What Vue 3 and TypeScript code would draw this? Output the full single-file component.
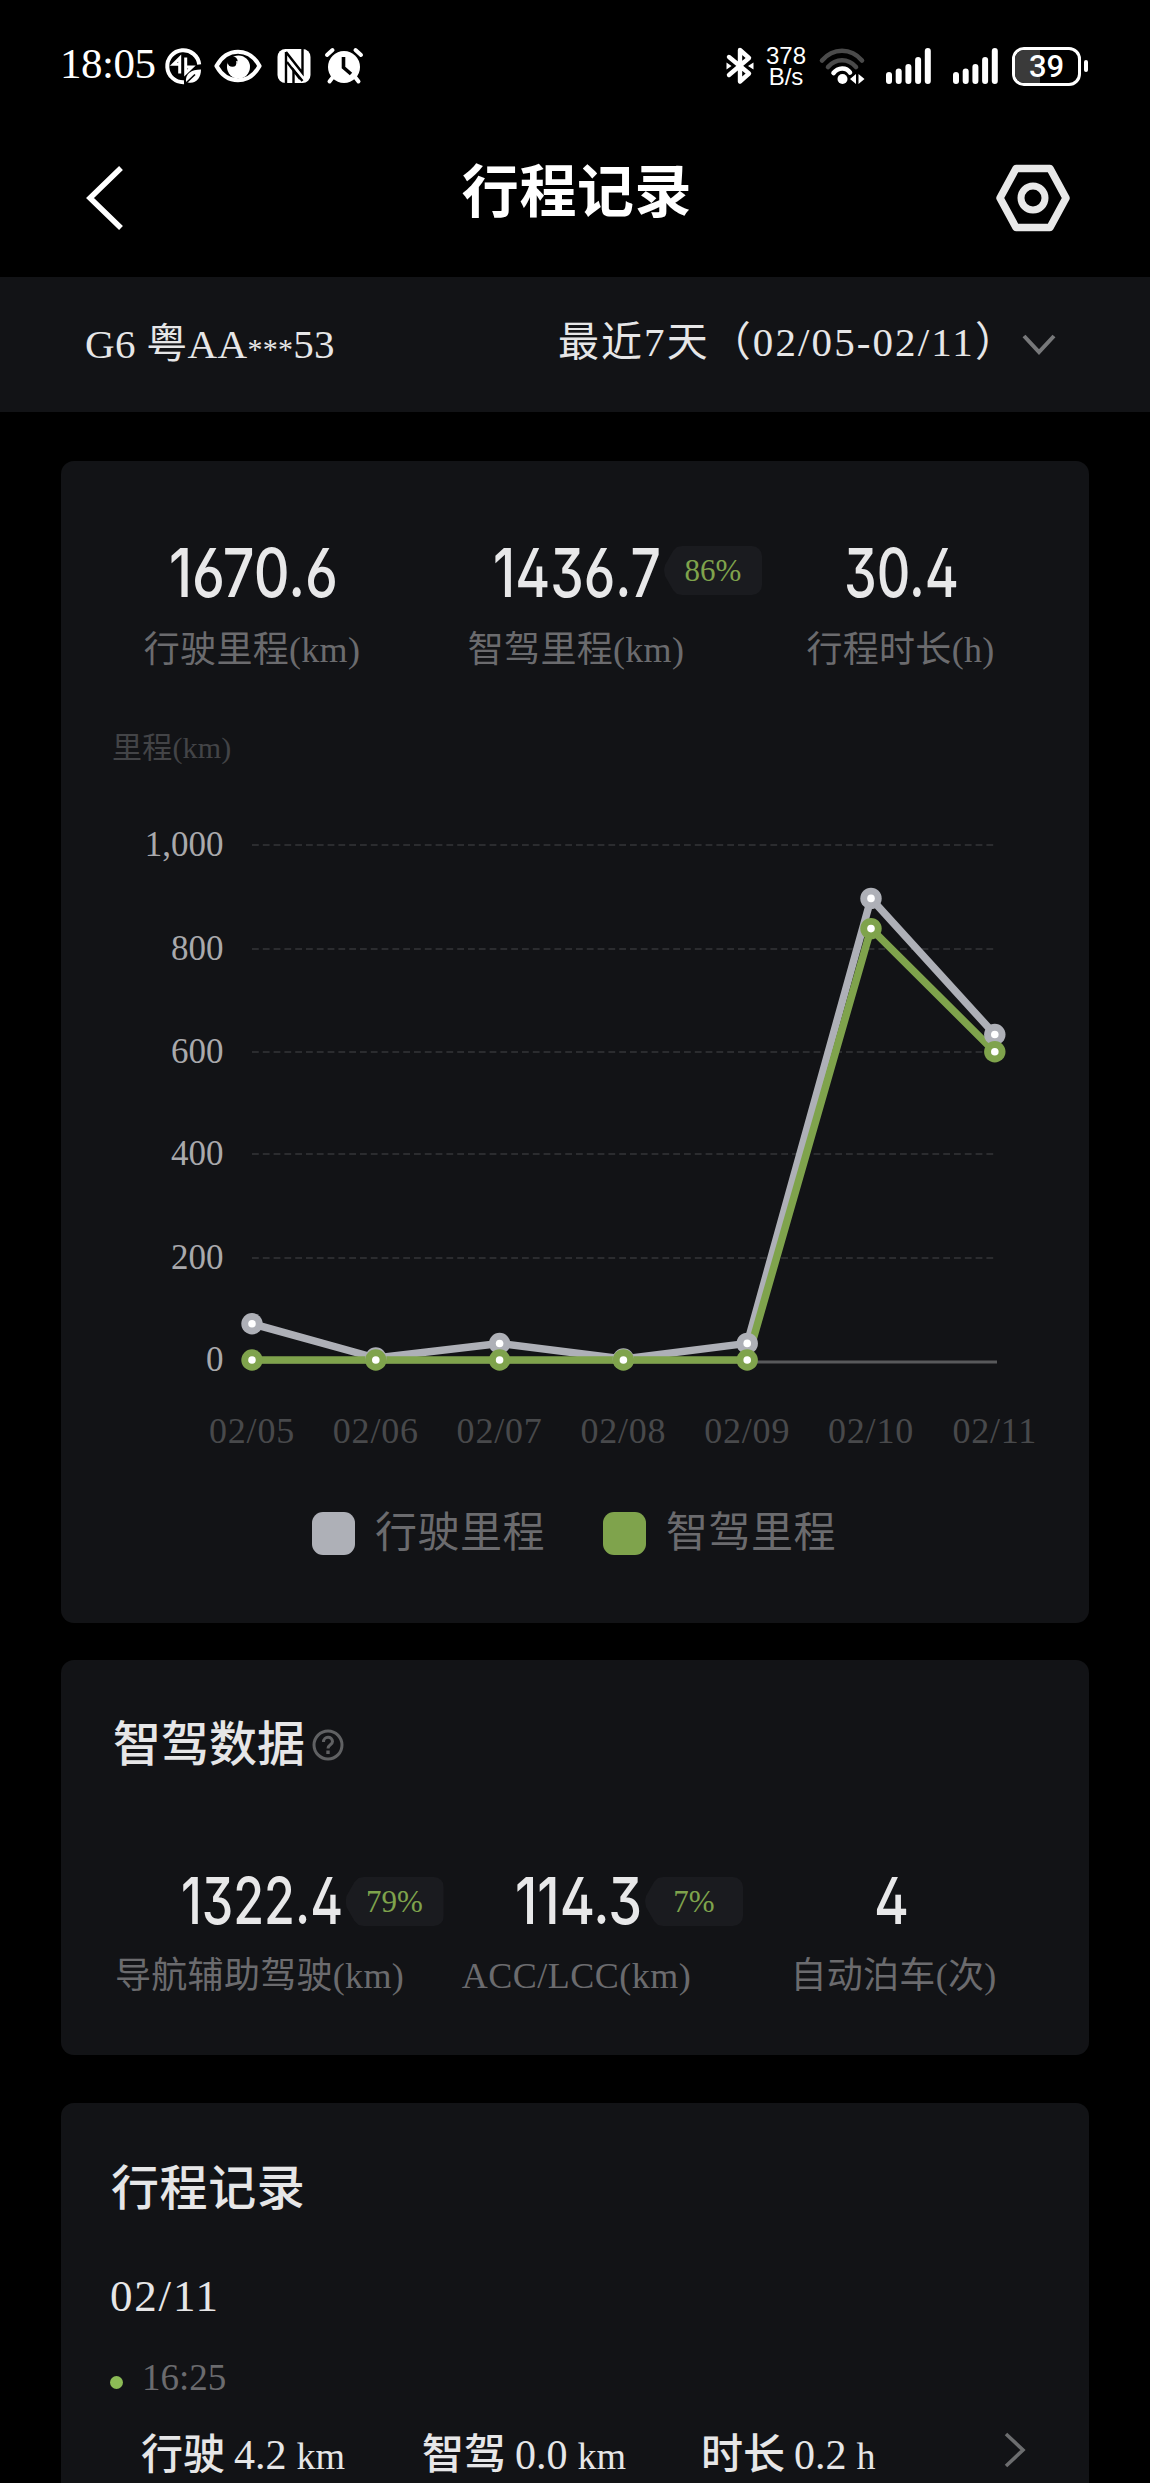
<script setup lang="ts">
interface Stat {
  value: string
  width: number
  label: string
  spacing?: number
  badge?: string
}

const summary: Stat[] = [
  { value: '1670.6', width: 169, label: '行驶里程(km)' },
  { value: '1436.7', width: 168, label: '智驾里程(km)', badge: '86%' },
  { value: '30.4', width: 115, label: '行程时长(h)' },
]

const assisted: Stat[] = [
  { value: '1322.4', width: 162, label: '导航辅助驾驶(km)', badge: '79%' },
  { value: '114.3', width: 127, label: 'ACC/LCC(km)', spacing: 0.5, badge: '7%' },
  { value: '4', width: 35, label: '自动泊车(次)' },
]

const ticks = [
  { label: '1,000', y: 845 },
  { label: '800', y: 949 },
  { label: '600', y: 1052 },
  { label: '400', y: 1154 },
  { label: '200', y: 1258 },
  { label: '0', y: 1360 },
]

const days = ['02/05', '02/06', '02/07', '02/08', '02/09', '02/10', '02/11']
const xOf = (i: number): number => 252 + i * 123.8
const driven = [1323.7, 1358, 1343.5, 1359, 1343.4, 898.4, 1034.5]
const piloted = [1360, 1360, 1360, 1360, 1360, 928.6, 1051.8]
const points = (ys: number[]): string => ys.map((y, i) => `${xOf(i)},${y}`).join(' ')

const bars = [12, 15.5, 20, 27, 36]

const trip = [
  { name: '行驶', value: '4.2', unit: 'km' },
  { name: '智驾', value: '0.0', unit: 'km' },
  { name: '时长', value: '0.2', unit: 'h' },
]
</script>

<template>
  <div class="screen">
    <div class="status">
      <div class="status-left">
        <span class="clock">18:05</span>
        <svg class="i-data" width="38" height="38" viewBox="0 0 38 38">
          <path d="M35.2 17.5A16 16 0 1 0 20 35.2" fill="none" stroke="#fff" stroke-width="4" />
          <path d="M15.7 26.5V11L9.5 17.200H15M21.700 10.500V26L28 20H22" fill="none" stroke="#fff" stroke-width="3" />
          <path d="M22 35C21 27 27 22.500 37 22.500C37 31 32 37 24 35.500Z" fill="#fff" />
          <path d="M21 37L31 27.500" stroke="#000" stroke-width="1.600" />
        </svg>
        <svg class="i-eye" width="48" height="34" viewBox="0 0 48 34">
          <path d="M2.500 17C13 -2 35 -2 45.500 17C35 36 13 36 2.500 17Z" fill="none" stroke="#fff" stroke-width="4.200" stroke-linejoin="round" />
          <circle cx="24.500" cy="18" r="11.500" fill="#fff" />
          <circle cx="18.500" cy="12.500" r="5.200" fill="#000" />
          <path d="M14 18C19 22 24 18 23 12" fill="none" stroke="#fff" stroke-width="1.500" />
        </svg>
        <svg class="i-nfc" width="34" height="34" viewBox="0 0 34 34">
          <rect x="0.500" y="0" width="33" height="34" rx="8" fill="#fff" />
          <path d="M9 34V3M9 3L25.500 24V0M16.500 34V21L25.500 32" fill="none" stroke="#000" stroke-width="2.400" />
          <path d="M12 11V34H15V17Z" fill="#fff" />
          <path d="M10 13L23 30" stroke="#000" stroke-width="2.200" />
        </svg>
        <svg class="i-alarm" width="38" height="36" viewBox="0 0 38 36">
          <circle cx="19" cy="19" r="16" fill="#fff" />
          <path d="M2 7L7.500 2M36 7L30.500 2M8 29L4.500 33.500M30 29L33.500 33.500" stroke="#fff" stroke-width="4" stroke-linecap="round" />
          <path d="M18.500 9V19.500L26 26" fill="none" stroke="#000" stroke-width="3.600" />
        </svg>
      </div>
      <div class="status-right">
        <svg width="28" height="38" viewBox="0 0 28 38">
          <path d="M3 10L23 26.500L14 34.500V3L23 11L3 28" fill="none" stroke="#fff" stroke-width="4.400" stroke-linejoin="round" stroke-linecap="round" />
          <path d="M0.500 15.500L5.500 19L0.500 22.500ZM27.500 15.500L22 19L27.500 22.500Z" fill="#fff" />
        </svg>
        <div class="speed"><span>378</span><span>B/s</span></div>
        <svg class="i-wifi" width="48" height="38" viewBox="0 0 48 38">
          <g fill="none" stroke-width="4.600" stroke-linecap="round">
            <path d="M3 13.500C14 0.500 32 0.500 43 13.500" stroke="#4a4a4a" />
            <path d="M9 20C17 11 29 11 37 20" stroke="#4a4a4a" />
            <path d="M14.500 26C19 20 27.500 20 31 25.500" stroke="#fff" />
          </g>
          <circle cx="23.500" cy="32" r="5" fill="#fff" />
          <path d="M37 27V37L31 32ZM39.500 27V37L45.500 32Z" fill="#fff" />
        </svg>
        <svg v-for="n in 2" :key="n" class="i-signal" width="46" height="38" viewBox="0 0 46 38">
          <rect v-for="(h, i) in bars" :key="i" :x="i * 9.700" :y="37 - h" width="6" :height="h" rx="3" fill="#fff" />
        </svg>
        <div class="battery"><span class="level"></span><span class="pct">39</span></div>
        <span class="nub"></span>
      </div>
    </div>

    <header class="header">
      <svg width="40" height="64" viewBox="0 0 40 64">
        <path d="M36 2L5 32L36 62" fill="none" stroke="#fff" stroke-width="5.500" />
      </svg>
      <h1>行程记录</h1>
      <svg width="76" height="68" viewBox="0 0 76 68">
        <path d="M21 4.500H55L71 34L55 63.500H21L5 34Z" fill="none" stroke="#e8e8e8" stroke-width="7.500" stroke-linejoin="round" />
        <circle cx="38" cy="34" r="12" fill="none" stroke="#e8e8e8" stroke-width="7" />
      </svg>
    </header>

    <div class="filter">
      <span class="car">G6 粤AA<span class="stars">***</span>53</span>
      <div class="range">
        <span>最近7天（02/05-02/11）</span>
        <svg width="34" height="24" viewBox="0 0 34 24">
          <path d="M2 3L17 19L32 3" fill="none" stroke="#77787a" stroke-width="4" />
        </svg>
      </div>
    </div>

    <section class="card overview">
      <div class="stats">
        <div v-for="s in summary" :key="s.label" class="stat">
          <div class="figure">
            <svg :width="s.width" height="60">
              <text x="0" y="54" :textLength="s.width" lengthAdjust="spacingAndGlyphs" class="digits">{{ s.value }}</text>
            </svg>
            <div v-if="s.badge" class="badge">{{ s.badge }}</div>
          </div>
          <div class="label">{{ s.label }}</div>
        </div>
      </div>
      <div class="unit">里程(km)</div>
      <svg class="chart" width="1028" height="680" viewBox="61 790 1028 680">
        <g v-for="t in ticks" :key="t.label">
          <line v-if="t.label !== '0'" x1="252" x2="994" :y1="t.y" :y2="t.y" stroke="#2b2c2f" stroke-width="2" stroke-dasharray="6.800 4" />
          <text x="223.500" :y="t.y + 10.500" text-anchor="end" class="tick">{{ t.label }}</text>
        </g>
        <line x1="252" x2="997" y1="1362" y2="1362" stroke="#58595b" stroke-width="3" />
        <text v-for="(d, i) in days" :key="d" :x="xOf(i)" y="1443" text-anchor="middle" class="day">{{ d }}</text>
        <g fill="none" stroke-width="7.500" stroke-linejoin="round">
          <polyline :points="points(driven)" stroke="#aeb0b7" />
          <polyline :points="points(piloted)" stroke="#7fa34c" />
        </g>
        <g v-for="(y, i) in driven" :key="'d' + i">
          <circle :cx="xOf(i)" :cy="y" r="10.700" fill="#aeb0b7" />
          <circle :cx="xOf(i)" :cy="y" r="3.800" fill="#fff" />
        </g>
        <g v-for="(y, i) in piloted" :key="'p' + i">
          <circle :cx="xOf(i)" :cy="y" r="10.700" fill="#7fa34c" />
          <circle :cx="xOf(i)" :cy="y" r="3.800" fill="#fff" />
        </g>
      </svg>
      <div class="legend">
        <i class="swatch grey"></i><span>行驶里程</span>
        <i class="swatch green"></i><span>智驾里程</span>
      </div>
    </section>

    <section class="card assist">
      <h2>
        智驾数据
        <svg width="32" height="32" viewBox="0 0 32 32" fill="none" stroke="#606163">
          <circle cx="16" cy="16" r="14" stroke-width="3" />
          <path d="M11.500 13C11.500 6.800 20.500 6.800 20.500 12.500C20.500 16 16 15.500 16 19.500" stroke-width="3" />
          <path d="M16 21.500V25" stroke-width="3.400" />
        </svg>
      </h2>
      <div class="stats">
        <div v-for="s in assisted" :key="s.label" class="stat">
          <div class="figure">
            <svg :width="s.width" height="60">
              <text x="0" y="51.500" :textLength="s.width" lengthAdjust="spacingAndGlyphs" class="digits">{{ s.value }}</text>
            </svg>
            <div v-if="s.badge" class="badge">{{ s.badge }}</div>
          </div>
          <div class="label" :style="{ letterSpacing: (s.spacing ?? 0.3) + 'px' }">{{ s.label }}</div>
        </div>
      </div>
    </section>

    <section class="card records">
      <h2>行程记录</h2>
      <div class="date">02/11</div>
      <div class="time"><i></i><span>16:25</span></div>
      <div class="trip">
        <div v-for="t in trip" :key="t.name" class="part">
          <span class="name">{{ t.name }}</span><span class="amount">{{ t.value }}</span><span class="km">{{ t.unit }}</span>
        </div>
        <svg width="26" height="36" viewBox="0 0 26 36">
          <path d="M4 2L21 18L4 34" fill="none" stroke="#6c6d6f" stroke-width="3.600" />
        </svg>
      </div>
    </section>
  </div>
</template>

<style>
html,
body {
  background: #000;
  overflow: hidden;
}
</style>

<style scoped>
.screen {
  width: 1150px;
  height: 2483px;
  overflow: hidden;
  background: #000;
  color: #e6e6e7;
  font-family: "Liberation Serif", "Noto Sans CJK SC", serif;
  white-space: nowrap;
}
svg {
  display: block;
  flex: none;
  overflow: visible;
}
.status {
  height: 100px;
  padding: 32px 62px 0 60px;
  box-sizing: border-box;
  display: flex;
  justify-content: space-between;
  color: #fff;
}
.status-left,
.status-right {
  display: flex;
  align-items: center;
  height: 68px;
}
.clock {
  font-size: 43px;
  line-height: 60px;
  width: 104px;
  margin-top: -4px;
  letter-spacing: -0.5px;
}
.i-eye { margin-left: 12px; }
.i-nfc { margin-left: 15px; }
.i-alarm { margin-left: 14px; }
.speed {
  margin-left: 11px;
  width: 42px;
  display: flex;
  flex-direction: column;
  font: 400 24px/21px "Liberation Sans", sans-serif;
  text-align: center;
}
.i-wifi { margin-left: 12px; }
.i-signal { margin-left: 19px; }
.i-signal + .i-signal { margin-left: 21px; }
.battery {
  margin-left: 13px;
  width: 69px;
  height: 39px;
  box-sizing: border-box;
  border: 3px solid #fff;
  border-radius: 12px;
  position: relative;
  overflow: hidden;
  text-align: center;
  font: 500 31px/33px Roboto, sans-serif;
}
.level {
  position: absolute;
  left: 0;
  top: 0;
  width: 25px;
  height: 33px;
  background: #3a3a3a;
}
.pct { position: relative; }
.nub {
  width: 4px;
  height: 12px;
  margin-left: 3px;
  border-radius: 2px;
  background: #fff;
}
.header {
  height: 177px;
  padding: 0 79px 0 85px;
  box-sizing: border-box;
  display: flex;
  align-items: center;
  justify-content: space-between;
}
.header svg { margin-top: 18px; }
h1 {
  margin: 8px 0 0 34px;
  font-size: 57px;
  line-height: 70px;
  font-weight: 700;
  letter-spacing: 0.6px;
  color: #fff;
}
.filter {
  height: 135px;
  padding: 0 94px 5px 85px;
  box-sizing: border-box;
  display: flex;
  align-items: center;
  justify-content: space-between;
  background: #121316;
  font-size: 41px;
  line-height: 60px;
}
.car {
  margin-top: 4px;
  letter-spacing: 0.3px;
}
.stars {
  font-size: 30px;
  line-height: 30px;
  vertical-align: -1px;
}
.range {
  display: flex;
  align-items: center;
  letter-spacing: 2.1px;
}
.range span { margin-right: -12px; }
.range svg {
  margin-top: 5px;
  margin-left: 16px;
}
.card {
  width: 1028px;
  margin-left: 61px;
  box-sizing: border-box;
  border-radius: 13px;
  background: #121316;
}
.overview {
  margin-top: 49px;
  height: 1162px;
  padding-top: 82px;
}
.stats {
  display: grid;
  grid-template-columns: 324px 324px 325px;
  padding-left: 29px;
}
.stat {
  display: flex;
  flex-direction: column;
  align-items: center;
}
.figure {
  position: relative;
  margin-left: 2px;
}
.digits {
  font-family: Inter, Roboto, sans-serif;
  font-size: 67px;
  font-weight: 500;
  font-feature-settings: "ss01", "cv09";
  fill: #e8e8e9;
}
.badge {
  position: absolute;
  left: calc(100% + 3px);
  top: 3px;
  width: 98px;
  height: 49px;
  border-radius: 0 10px 10px 0;
  clip-path: polygon(0 24px, 1px 19px, 9px 5px, 13px 1px, 18px 0, 100% 0, 100% 100%, 18px 100%, 13px 48px, 9px 44px, 1px 30px);
  background: #1a1b1f;
  color: #7fa34c;
  font-size: 31px;
  line-height: 49px;
  text-align: center;
}
.label {
  margin-top: 27px;
  font-size: 36px;
  line-height: 40px;
  letter-spacing: 0.3px;
  color: #6b6b6e;
}
.unit {
  margin: 58px 0 0 51px;
  font-size: 30px;
  line-height: 40px;
  letter-spacing: 0.2px;
  color: #434447;
}
.chart { margin-top: 22px; }
.tick {
  font-size: 35px;
  fill: #a9a9ac;
}
.day {
  font-size: 36px;
  letter-spacing: 0.8px;
  fill: #48494b;
}
.legend {
  margin-top: 38px;
  padding-left: 251px;
  display: flex;
  align-items: center;
  height: 50px;
  font-size: 42px;
  line-height: 50px;
  letter-spacing: 0.5px;
  color: #6b6b6e;
}
.swatch {
  width: 43px;
  height: 43px;
  border-radius: 11px;
  margin-right: 20px;
}
.grey { background: #aeb0b7; }
.green { background: #7fa34c; margin-left: 58px; }
.assist {
  margin-top: 37px;
  height: 395px;
  padding-top: 55px;
}
h2 {
  margin: 0;
  padding-left: 52px;
  display: flex;
  align-items: center;
  font-size: 48px;
  line-height: 60px;
  font-weight: 500;
}
h2 svg { margin-left: 7px; }
.assist .stats {
  margin-top: 97px;
  padding-left: 40px;
  grid-template-columns: 317px 317px 317px;
}
.assist .figure { margin-left: 4px; }
.assist .stat:last-child .figure { margin-left: -5px; }
.assist .digits { font-size: 65px; }
.assist .badge { top: 5px; }
.assist .label { margin-top: 24px; }
.records {
  margin-top: 48px;
  height: 500px;
  padding-top: 56px;
}
.records h2 {
  padding-left: 50px;
  letter-spacing: 0.6px;
}
.date {
  margin: 47px 0 0 49px;
  font-size: 45px;
  line-height: 60px;
  letter-spacing: 1.8px;
}
.time {
  margin: 32px 0 0 49px;
  display: flex;
  align-items: center;
  height: 40px;
  font-size: 37px;
  line-height: 40px;
  color: #6b6b6e;
}
.time i {
  width: 13px;
  height: 13px;
  border-radius: 50%;
  margin: 9px 19px 0 0;
  background: #8cbb56;
}
.trip {
  margin-top: 27px;
  padding-left: 80px;
  display: grid;
  grid-template-columns: 281px 279px 301px 30px;
  align-items: center;
  height: 60px;
}
.trip svg { margin-top: -12px; }
.part {
  display: flex;
  align-items: baseline;
  font-size: 42px;
  line-height: 60px;
}
.name { font-weight: 500; }
.amount {
  margin-left: 9px;
  font-size: 42px;
}
.km {
  margin-left: 10px;
  font-size: 38px;
}
</style>
